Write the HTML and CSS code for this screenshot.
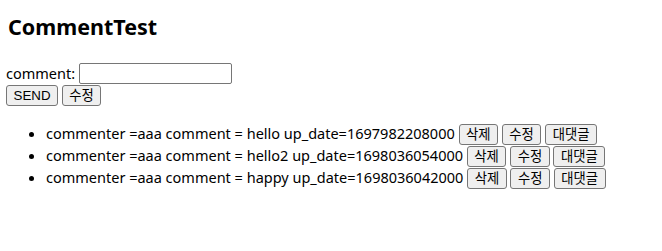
FILE: index.html
```html
<!DOCTYPE html>
<html>
<head>
<meta charset="utf-8">
<link rel="stylesheet" href="styles.css">
</head>
<body>
<h2 class="title">CommentTest</h2>
<form class="form">
<label class="label">comment: <input class="field" type="text"></label><br>
<button class="btn" type="button">SEND</button>
<button class="btn" type="button">수정</button>
</form>
<ul class="list">
<li class="item">commenter =aaa comment = hello up_date=1697982208000 <button class="btn" type="button">삭제</button> <button class="btn" type="button">수정</button> <button class="btn" type="button">대댓글</button></li>
<li class="item">commenter =aaa comment = hello2 up_date=1698036054000 <button class="btn" type="button">삭제</button> <button class="btn" type="button">수정</button> <button class="btn" type="button">대댓글</button></li>
<li class="item">commenter =aaa comment = happy up_date=1698036042000 <button class="btn" type="button">삭제</button> <button class="btn" type="button">수정</button> <button class="btn" type="button">대댓글</button></li>
</ul>
</body>
</html>
```

FILE: styles.css
```css
body {
  margin: 6px;
  font-family: "Noto Sans", "Noto Sans CJK KR", sans-serif;
  font-size: 14.5px;
  line-height: 20px;
  color: #000;
  background: #fff;
}
.title {
  font-size: 21.5px;
  line-height: 28px;
  margin: 7px 2px 22px;
}
.form {
  margin: 0;
}
.label {
  line-height: 21px;
}
.field {
  box-sizing: border-box;
  width: 153px;
  height: 21px;
  padding: 1px 2px;
  border: 1px solid #767676;
  border-radius: 2px;
  font: inherit;
  vertical-align: baseline;
}
.btn {
  box-sizing: border-box;
  height: 21px;
  font-family: "Liberation Sans", "Noto Sans CJK KR", sans-serif;
  font-size: 13.33px;
  line-height: 15px;
  padding: 1px 6.5px;
  background: #efefef;
  border: 1px solid #767676;
  border-radius: 3px;
  color: #000;
}
.list {
  margin: 17px 0;
  padding-left: 40px;
}
.item {
  line-height: 21px;
}
```
